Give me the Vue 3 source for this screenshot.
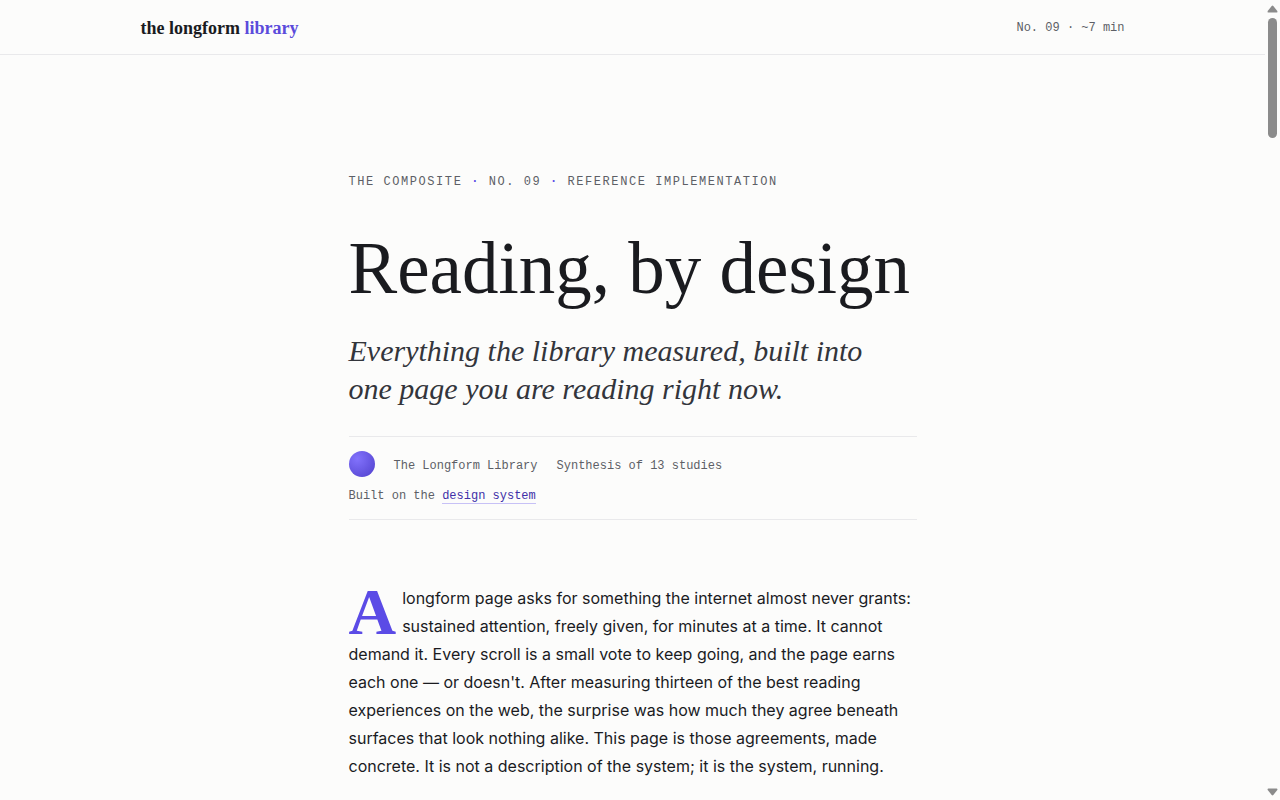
<script setup>
const meta = ['The Longform Library', 'Synthesis of 13 studies']
</script>

<template>
  <div class="page">
    <header class="bar">
      <div class="bar-inner">
        <a class="brand" href="#top">the longform <span>library</span></a>
        <span class="issue">No. 09 · ~7 min</span>
      </div>
    </header>

    <main id="top" class="article">
      <p class="eyebrow">The composite <b>·</b> No. 09 <b>·</b> Reference implementation</p>
      <h1>Reading, by design</h1>
      <p class="deck">Everything the library measured, built into one page you are reading right now.</p>
      <div class="byline">
        <span class="avatar" aria-hidden="true"></span>
        <span v-for="item in meta" :key="item">{{ item }}</span>
        <span class="built">Built on the <a href="#system">design system</a></span>
      </div>
      <p class="lead">A longform page asks for something the internet almost never grants: sustained attention, freely given, for minutes at a time. It cannot demand it. Every scroll is a small vote to keep going, and the page earns each one — or doesn't. After measuring thirteen of the best reading experiences on the web, the surprise was how much they agree beneath surfaces that look nothing alike. This page is those agreements, made concrete. It is not a description of the system; it is the system, running.</p>
    </main>

    <div class="scrollbar" aria-hidden="true">
      <svg width="11" height="8" viewBox="0 0 11 8"><path d="M4.700 .9Q5.500 0 6.300 .9L10.300 6Q11 7.500 9.600 7.500H1.400Q0 7.500 .7 6Z" /></svg>
      <div class="track"><div class="thumb"></div></div>
      <svg width="11" height="8" viewBox="0 0 11 8"><path d="M4.700 7.100Q5.500 8 6.300 7.100L10.300 2Q11 .5 9.600 .5H1.400Q0 .5 .7 2Z" /></svg>
    </div>
  </div>
</template>

<style>
body {
  background: #fcfcfb;
}
</style>

<style scoped>
.page {
  box-sizing: border-box;
  min-height: 100vh;
  padding-right: 15px;
  color: #1a1b1f;
  font-family: Inter, sans-serif;
}

.bar {
  border-bottom: 1px solid #e9e9eb;
}

.bar-inner {
  display: flex;
  align-items: center;
  justify-content: space-between;
  box-sizing: border-box;
  max-width: 984px;
  min-height: 54px;
  margin: 0 auto;
  padding-top: 2px;
}

.brand {
  color: #1a1b1f;
  font: bold 18px/24px "Liberation Serif", serif;
  text-decoration: none;
}

.brand span {
  color: #5b4bdb;
}

.issue,
.eyebrow,
.byline {
  color: #5d5f66;
  font-family: "Liberation Mono", monospace;
  font-size: 12px;
  line-height: 22px;
}

.article {
  max-width: 568px;
  margin: 0 auto;
  padding: 116px 0 16px;
}

.eyebrow {
  margin: 0;
  letter-spacing: 0.13em;
  text-transform: uppercase;
}

.eyebrow b {
  color: #5b4be6;
}

h1 {
  margin: 38px 0 0;
  font: normal 73px/76px "Liberation Serif", serif;
}

.deck {
  max-width: 540px;
  margin: 25px 0 0;
  color: #33353b;
  font: italic 30px/38px "Liberation Serif", serif;
}

.byline {
  display: flex;
  flex-wrap: wrap;
  align-items: flex-end;
  gap: 8px 19px;
  margin-top: 28px;
  padding: 14px 0 12px;
  border-top: 1px solid #e9e9eb;
  border-bottom: 1px solid #e9e9eb;
}

.avatar {
  width: 26px;
  height: 26px;
  border-radius: 50%;
  background: radial-gradient(circle at 32% 30%, #8272fc, #5040cc);
}

.built {
  flex-basis: 100%;
}

.byline a {
  border-bottom: 1px solid #c7c1f6;
  color: #4030a8;
  text-decoration: none;
}

.lead {
  margin: 64px 0 0;
  font-size: 16px;
  line-height: 28px;
}

.lead::first-letter {
  float: left;
  padding-right: 6px;
  color: #5b4be6;
  font: bold 66px/56px "Liberation Serif", serif;
}

.scrollbar {
  position: fixed;
  top: 0;
  right: 0;
  bottom: 0;
  display: flex;
  flex-direction: column;
  align-items: center;
  box-sizing: border-box;
  width: 15px;
  padding: 5px 0 4px;
}

.scrollbar svg {
  fill: #8b8b8b;
}

.track {
  flex: 1;
  padding: 5px 0;
}

.thumb {
  width: 9px;
  height: 120px;
  border-radius: 5px;
  background: #8b8b8b;
}
</style>
